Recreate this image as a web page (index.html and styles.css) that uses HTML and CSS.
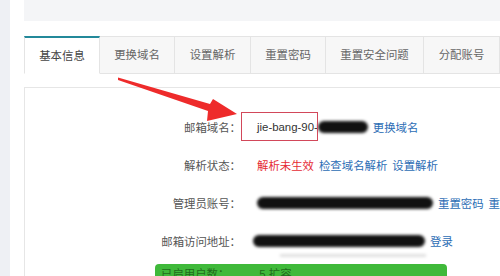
FILE: index.html
```html
<!DOCTYPE html>
<html lang="zh-CN">
<head>
    <meta charset="UTF-8">
    <title>邮箱基本信息</title>
    <link rel="stylesheet" href="styles.css">
</head>
<body>
    <div class="page">
        <div class="sidebar"></div>
        <div class="main">
            <div class="banner"></div>

            <!-- tabs -->
            <div class="tabs">
                <div class="tab active w76">基本信息</div>
                <div class="tab w75">更换域名</div>
                <div class="tab w76">设置解析</div>
                <div class="tab w75">重置密码</div>
                <div class="tab w98">重置安全问题</div>
                <div class="tab w76">分配账号</div>
            </div>

            <!-- info panel -->
            <div class="panel">
                <div class="row">
                    <div class="label">邮箱域名：</div>
                    <div class="value">
                        <span class="text">jie-bang-90-</span><span class="blob b1"></span>
                        <a class="link">更换域名</a>
                        <span class="mark"></span>
                    </div>
                </div>
                <div class="row">
                    <div class="label">解析状态：</div>
                    <div class="value">
                        <span class="warn">解析未生效</span>
                        <a class="link">检查域名解析</a>
                        <a class="link">设置解析</a>
                    </div>
                </div>
                <div class="row">
                    <div class="label">管理员账号：</div>
                    <div class="value">
                        <span class="blob b2"></span>
                        <a class="link">重置密码</a>
                        <a class="link">重置安全问题</a>
                    </div>
                </div>
                <div class="row">
                    <div class="label">邮箱访问地址：</div>
                    <div class="value shift">
                        <span class="blob b3"></span>
                        <a class="link">登录</a>
                    </div>
                </div>
                <div class="smudge"></div>
                <div class="usage">
                    <span>已启用户数：</span><span class="num">5 扩容</span>
                </div>
            </div>
        </div>
    </div>

    <svg class="arrow" width="500" height="276" viewBox="0 0 500 276">
        <polygon points="118,77.5 210,104 213,99 237,114 207,121 208,111 118,80" fill="#ee2b2b"/>
    </svg>
</body>
</html>
```

FILE: styles.css
```css
body {
    margin: 0;
    font-family: "Liberation Sans", "Noto Sans CJK SC", sans-serif;
    font-size: 11.4px;
    color: #555;
    background: #fff;
    overflow: hidden;
}
.page {
    display: flex;
    height: 276px;
}
.sidebar {
    width: 10px;
    background: #eef0f4;
}
.main {
    flex: 1;
    padding-left: 14px;
    overflow: hidden;
}
.banner {
    height: 21px;
    background: #f4f5f7;
}

.tabs {
    display: flex;
    margin-top: 15px;
    height: 38px;
}
.tab {
    box-sizing: border-box;
    height: 38px;
    line-height: 36px;
    text-align: center;
    background: #f7f7f7;
    border-top: 1px solid #e4e4e4;
    border-right: 1px solid #e4e4e4;
    border-bottom: 1px solid #e4e4e4;
    color: #666;
    flex-shrink: 0;
}
.tab.active {
    background: #fff;
    border-top: 2px solid #23899a;
    border-left: 1px solid #e4e4e4;
    border-bottom-color: #fff;
    color: #444;
}
.w75 { width: 75px; }
.w76 { width: 76px; }
.w98 { width: 98px; }

.panel {
    margin-top: 13px;
    border-top: 1px solid #e6e6e6;
    border-left: 1px solid #e6e6e6;
    padding-top: 20px;
    height: 300px;
}
.row {
    display: flex;
    align-items: center;
    height: 38px;
}
.label {
    width: 216px;
    flex-shrink: 0;
    text-align: right;
    white-space: nowrap;
    color: #555;
}
.value {
    position: relative;
    display: flex;
    align-items: center;
    gap: 5px;
    padding-left: 16px;
    white-space: nowrap;
}
.value.shift {
    padding-left: 12px;
}
.text {
    color: #333;
    margin-right: -5px;
}
.warn {
    color: #e52b34;
}
.link {
    color: #2c6db5;
    cursor: pointer;
}
.blob {
    display: inline-block;
    flex-shrink: 0;
    height: 12px;
    background: #111;
    border-radius: 6px;
    filter: blur(1.6px);
}
.b1 { width: 50px; }
.b2 { width: 176px; }
.b3 { width: 172px; }

/* annotation box drawn round the domain */
.mark {
    position: absolute;
    left: 0;
    top: 50%;
    margin-top: -15px;
    width: 75px;
    height: 27px;
    border: 1px solid #d2485a;
}

.smudge {
    margin: -6px 0 0 255px;
    width: 146px;
    height: 3px;
    background: rgba(0, 0, 0, 0.12);
    filter: blur(1.5px);
}
.usage {
    margin: 7px 0 0 130px;
    width: 292px;
    height: 40px;
    box-sizing: border-box;
    padding: 1px 6px;
    background: #3fb93a;
    border-radius: 4px;
    color: #1f6b1c;
    white-space: nowrap;
}
.usage .num {
    margin-left: 30px;
}

.arrow {
    position: absolute;
    left: 0;
    top: 0;
    pointer-events: none;
}
```
